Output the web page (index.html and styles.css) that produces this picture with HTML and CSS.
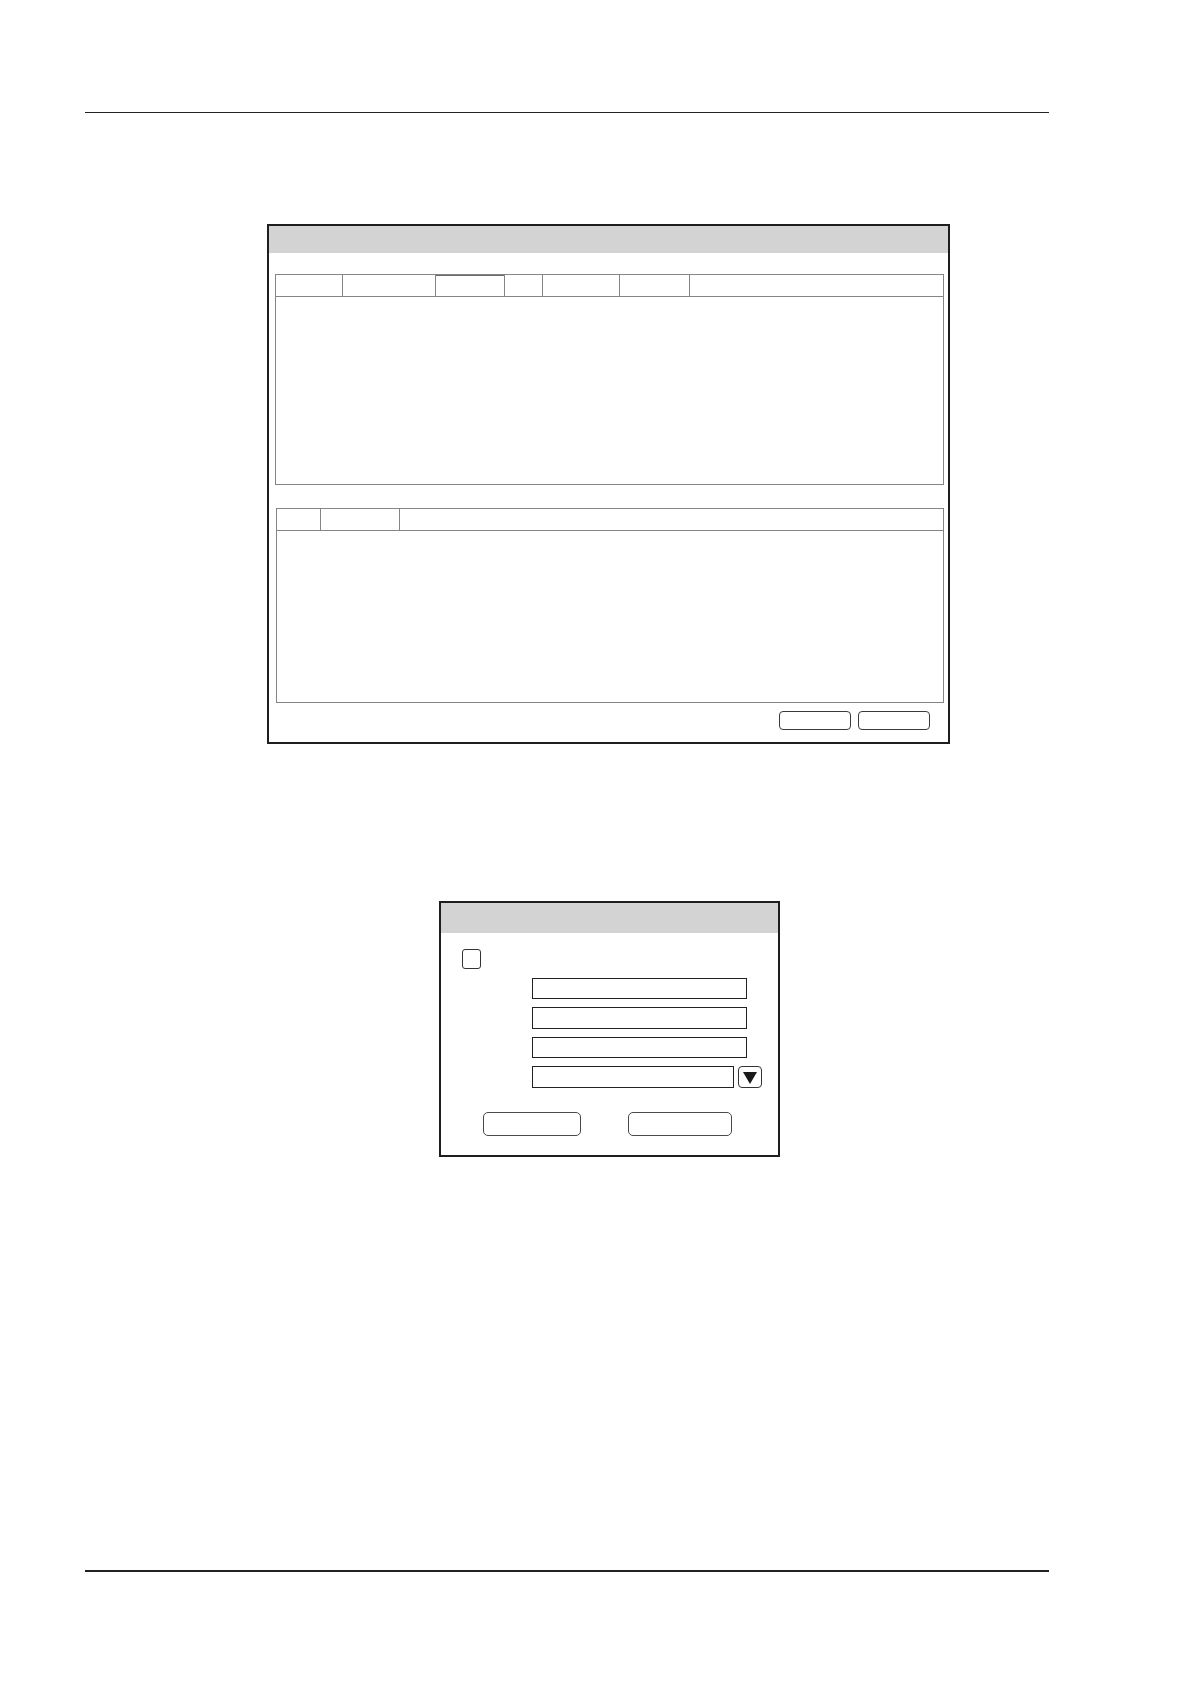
FILE: index.html
```html
<!DOCTYPE html>
<html>
<head>
<meta charset="utf-8">
<link rel="stylesheet" href="styles.css">
</head>
<body>
<div class="page">
  <div class="rule rule-top"></div>

  <div class="dlg dlg-main">
    <div class="dlg-head"></div>
    <div class="dlg-body">
      <div class="panel panel-a">
        <div class="tabs">
          <div class="tab w67"></div>
          <div class="tab w93"></div>
          <div class="tab w69 active"></div>
          <div class="tab w38"></div>
          <div class="tab w77"></div>
          <div class="tab w70"></div>
          <div class="tab rest"></div>
        </div>
      </div>
      <div class="panel panel-b">
        <div class="tabs">
          <div class="tab w44"></div>
          <div class="tab w79"></div>
          <div class="tab rest"></div>
        </div>
      </div>
      <div class="btn-row">
        <div class="btn btn-sm"></div>
        <div class="btn btn-sm"></div>
      </div>
    </div>
  </div>

  <div class="dlg dlg-small">
    <div class="dlg-head tall"></div>
    <div class="form">
      <div class="check"></div>
      <div class="fields">
        <div class="field"></div>
        <div class="field"></div>
        <div class="field"></div>
        <div class="field-row">
          <div class="field short"></div>
          <div class="drop">
            <svg width="14" height="12" viewBox="0 0 14 12"><polygon points="0,0 14,0 7,12" fill="#1a1a1a"/></svg>
          </div>
        </div>
      </div>
      <div class="form-btns">
        <div class="btn btn-lg a"></div>
        <div class="btn btn-lg b"></div>
      </div>
    </div>
  </div>

  <div class="rule rule-bottom"></div>
</div>
</body>
</html>
```

FILE: styles.css
```css
html, body {
  margin: 0;
  padding: 0;
  background: #ffffff;
  font-family: "Liberation Sans", Arial, sans-serif;
}

.page {
  width: 1191px;
  height: 1684px;
  position: relative;
  overflow: hidden;
}

.rule {
  margin-left: 85px;
  width: 964px;
  background: #222222;
}
.rule-top {
  margin-top: 111.5px;
  height: 1.5px;
}
.rule-bottom {
  margin-top: 412.5px;
  height: 2px;
}

.dlg {
  border: 2px solid #1e1e1e;
  box-sizing: border-box;
  background: #ffffff;
}
.dlg-head {
  height: 27px;
  background: #d3d3d3;
}
.dlg-head.tall {
  height: 30px;
}

.dlg-main {
  margin-top: 110.5px;
  margin-left: 267px;
  width: 683px;
  height: 520px;
}
.dlg-body {
  padding: 21px 4px 0 6px;
  display: flex;
  flex-direction: column;
}

.panel {
  border: 1px solid #858585;
  box-sizing: border-box;
}
.panel-a {
  height: 211px;
}
.panel-b {
  height: 195px;
  margin-top: 23px;
  margin-left: 1px;
}

.tabs {
  display: flex;
  height: 21px;
  border-bottom: 1px solid #858585;
}
.tab {
  box-sizing: border-box;
  border-right: 1px solid #858585;
  flex: none;
}
.tab.rest {
  flex: 1;
  border-right: none;
}
.tab.active {
  box-shadow: inset 0 1px 0 #6a6a6a;
}
.w67 { width: 67px; }
.w93 { width: 93px; }
.w69 { width: 69px; }
.w38 { width: 38px; }
.w77 { width: 77px; }
.w70 { width: 70px; }
.w44 { width: 44px; }
.w79 { width: 79px; }

.btn-row {
  display: flex;
  justify-content: flex-end;
  gap: 7px;
  margin-top: 8px;
  padding-right: 14px;
}
.btn {
  box-sizing: border-box;
  border: 1px solid #3a3a3a;
  border-radius: 4px;
  background: #ffffff;
}
.btn-sm {
  width: 72px;
  height: 19px;
}

.dlg-small {
  margin-top: 157.5px;
  margin-left: 439px;
  width: 341px;
  height: 256px;
  border-bottom-width: 2.5px;
}
.form {
  padding: 16px 0 0 21px;
}
.check {
  width: 19px;
  height: 20px;
  box-sizing: border-box;
  border: 1.5px solid #333333;
  border-radius: 3px;
}
.fields {
  margin-top: 9px;
  margin-left: 70px;
  display: flex;
  flex-direction: column;
  gap: 8.3px;
}
.field {
  width: 215px;
  height: 21.2px;
  box-sizing: border-box;
  border: 1.5px solid #222222;
}
.field-row {
  display: flex;
  align-items: flex-start;
  gap: 4px;
}
.field.short {
  width: 202px;
}
.drop {
  width: 24px;
  height: 22px;
  box-sizing: border-box;
  border: 1.5px solid #333333;
  border-radius: 4px;
  display: flex;
  align-items: center;
  justify-content: center;
}
.drop svg {
  display: block;
  margin-top: 2px;
}

.form-btns {
  display: flex;
  margin-top: 24px;
  margin-left: 21px;
  gap: 47px;
}
.btn-lg {
  height: 24px;
  border-radius: 5px;
  border: 1.5px solid #4a4a4a;
}
.btn-lg.a { width: 98px; }
.btn-lg.b { width: 104px; }
```
